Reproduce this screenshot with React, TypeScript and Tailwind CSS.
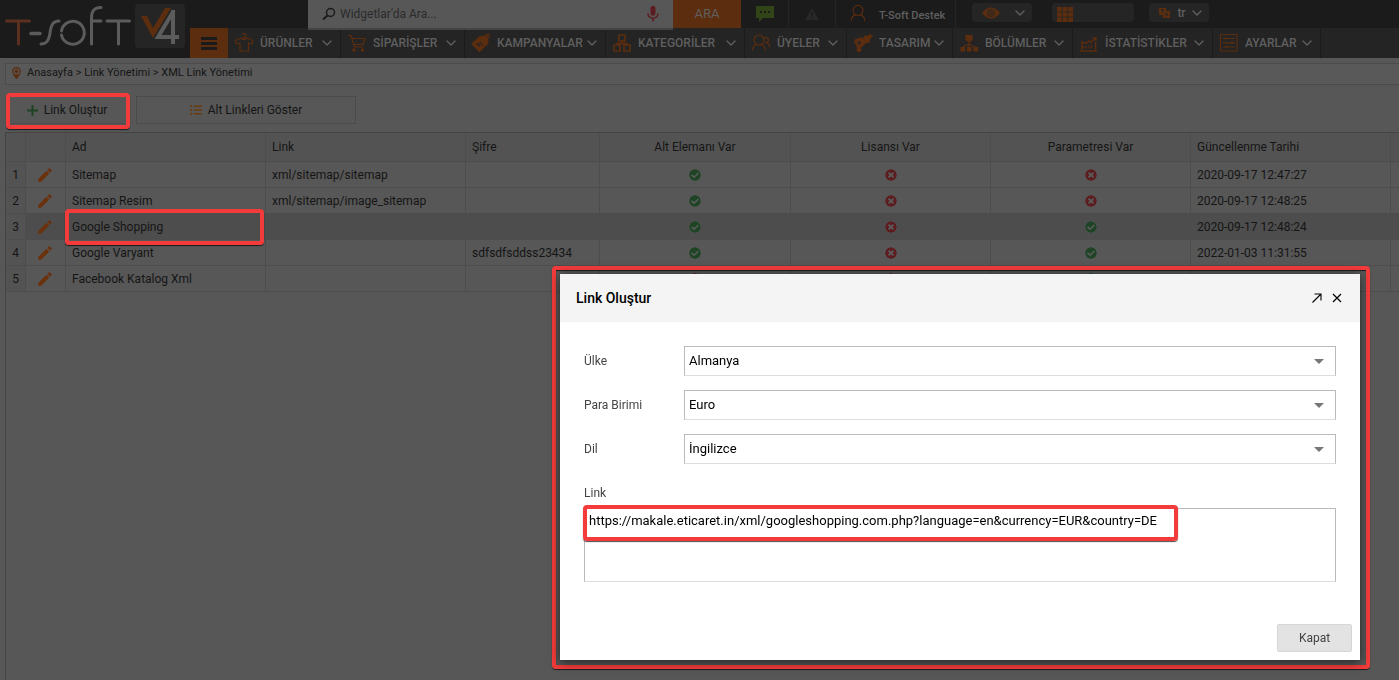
import { useState } from "react";
import type { ReactNode } from "react";
import { ChevronDown } from "lucide-react";
import { FaCheckCircle, FaTimesCircle, FaListUl } from "react-icons/fa";
import { MdEdit, MdMic } from "react-icons/md";

const Logo = () => (
  <svg width="190" height="58" viewBox="0 0 190 58" fill="none" aria-label="T-Soft V4" role="img">
    <g strokeWidth="3" strokeLinecap="round">
      <path d="M6.5 21H29.500M18.500 21V44" stroke="#5c3020" />
      <path d="M31 33.500H40" stroke="#5c5c5c" strokeWidth="3.500" />
      <path d="M41 44C47 44 49 40 50 33C51 25 53 21 59 21" stroke="#5c5c5c" />
      <path d="M61.500 35A11.500 11.500 0 1 0 66 23.500A11.500 11.500 0 0 0 61.500 31" stroke="#5c5c5c" />
      <path d="M91.500 44V18C91.500 11 94 7.500 101 7.500M91.500 21H101" stroke="#5c5c5c" />
      <path d="M107 21H129.500M118.500 21V44" stroke="#5c5c5c" />
    </g>
    <rect x="135" y="4" width="50" height="44" rx="4" fill="#252525" />
    <path d="M173 12L158 37H179M173 10V44" stroke="#5c5c5c" strokeWidth="4" />
    <path d="M141 16H147L153 28L165 8H171L153 38Z" fill="#5c2d0e" />
  </svg>
);

const Icon = ({ children, size = 20 }: { children: ReactNode; size?: number }) => (
  <svg width={size} height={size} viewBox="0 0 20 20" fill="none" stroke="#5c2d0e" strokeWidth="1.2" className="shrink-0">
    {children}
  </svg>
);

const menu = [
  {
    label: "ÜRÜNLER",
    width: "w-[113px]",
    icon: (
      <Icon>
        <path d="M10 5.500V4Q12 3.500 12 2Q12 .7 10 .7Q8.300 .7 8.300 2.300M7 5L1.500 7.500L2.500 11L6 10V18H14.500V10L18 11L18.800 7.500L13 5Q10 8 7 5Z" />
      </Icon>
    ),
  },
  {
    label: "SİPARİŞLER",
    width: "w-[124px]",
    icon: (
      <Icon>
        <path d="M1 2.500H4L7.500 14H16.500M5 5.500H18L16 11.500H6.500" />
        <circle cx="7" cy="17" r="1.700" fill="#5c2d0e" stroke="none" />
        <circle cx="15.500" cy="17" r="1.700" fill="#5c2d0e" stroke="none" />
      </Icon>
    ),
  },
  {
    label: "KAMPANYALAR",
    width: "w-[141px]",
    icon: (
      <Icon>
        <path d="M1 11L9 3.500L16 3L17 10L8.500 18.500Z" fill="#5c2d0e" />
        <path d="M13 6.500Q12 3 16 1.500Q19.500 1 18.500 4L15 7" />
        <path d="M9.500 8.500L8 14" stroke="#252525" strokeWidth="1" />
        <circle cx="6.500" cy="11" r="1" stroke="#252525" strokeWidth=".8" />
        <circle cx="11" cy="11.500" r="1" stroke="#252525" strokeWidth=".8" />
      </Icon>
    ),
  },
  {
    label: "KATEGORİLER",
    width: "w-[139px]",
    icon: (
      <Icon>
        <path d="M7 2H13V8H7ZM2 12H8V18H2ZM12 12H18V18H12ZM10 8V10.500M5 12V10.500H15V12" strokeWidth="1.600" />
      </Icon>
    ),
  },
  {
    label: "ÜYELER",
    width: "w-[102px]",
    icon: (
      <Icon>
        <circle cx="8" cy="7" r="5" />
        <path d="M1.500 17.500Q1.500 12 6 11.500M10 11.500Q14.500 12.500 14.500 17.500M13 5.500A2.500 2.500 0 1 1 14 9.500M15.500 10Q18.500 10 18.500 14" />
      </Icon>
    ),
  },
  {
    label: "TASARIM",
    width: "w-[106px]",
    icon: (
      <Icon>
        <path d="M2 7L8 5L11 6L12 3L15 3.500L17 1.500L19 3L16.500 6L16 9L12 10L9 13L7 14L8 17L6 19L4 17L4.500 13L2 10Z" fill="#5c2d0e" />
        <path d="M4 9L7 8L8 10L6 12Z" fill="#252525" stroke="none" />
      </Icon>
    ),
  },
  {
    label: "BÖLÜMLER",
    width: "w-[120px]",
    icon: (
      <Icon>
        <path d="M7 2.500H13V7L11.500 8H8.500L7 7ZM2 14.500H5.500V18H2ZM8.500 14.500H12V18H8.500ZM15 14.500H18.500V18H15Z" fill="#5c2d0e" />
        <path d="M10 8V14M4 14L10 11L16 14" />
      </Icon>
    ),
  },
  {
    label: "İSTATİSTİKLER",
    width: "w-[140px]",
    icon: (
      <Icon>
        <path d="M1 18H18M3 16.500V9L7 10.500L10 8L12 9.500L16.500 5M13.500 5H17V8M16.500 9V16.500" strokeWidth="1.500" />
        <path d="M5 15.500V13M7.500 15.500V13.500M10 15.500V12.500M12.500 15.500V12" />
      </Icon>
    ),
  },
  {
    label: "AYARLAR",
    width: "w-[108px]",
    icon: (
      <Icon>
        <rect x="1.500" y="1.500" width="16.500" height="16.500" rx="1" />
        <path d="M4 5.500H16M4 9.800H16M4 14H16M7 4.200V6.800M13 8.500V11.100M8 12.700V15.300" />
      </Icon>
    ),
  },
];

type Row = { name: string; link: string; pass: string; flags: boolean[]; date: string };

const rows: Row[] = [
  { name: "Sitemap", link: "xml/sitemap/sitemap", pass: "", flags: [true, false, false], date: "2020-09-17 12:47:27" },
  { name: "Sitemap Resim", link: "xml/sitemap/image_sitemap", pass: "", flags: [true, false, false], date: "2020-09-17 12:48:25" },
  { name: "Google Shopping", link: "", pass: "", flags: [true, false, true], date: "2020-09-17 12:48:24" },
  { name: "Google Varyant", link: "", pass: "sdfsdfsddss23434", flags: [true, false, true], date: "2022-01-03 11:31:55" },
  { name: "Facebook Katalog Xml", link: "", pass: "", flags: [false, false, true], date: "" },
];

const fields = [
  { id: "country", label: "Ülke", value: "Almanya" },
  { id: "currency", label: "Para Birimi", value: "Euro" },
  { id: "language", label: "Dil", value: "İngilizce" },
];

const Flag = ({ on }: { on: boolean }) =>
  on ? (
    <FaCheckCircle className="mx-auto h-3 w-3 rounded-full bg-[#5c5c5c] text-[#1f4425]" />
  ) : (
    <FaTimesCircle className="mx-auto h-3 w-3 rounded-full bg-[#5c5c5c] text-[#5c1d20]" />
  );

// red marker drawn round an element
const marker = "pointer-events-none absolute rounded border-4 border-[#f43b3b] shadow-[0_1px_1px_rgba(0,0,0,0.7)]";

const Header = () => (
  <header className="flex h-[58px] bg-[#1b1b1b] text-[#5f5f5f]">
    <a href="#" className="w-[190px] shrink-0">
      <Logo />
    </a>
    <div className="flex min-w-0 flex-1 flex-col">
      <div className="flex h-7 pl-[118px]">
        <label className="relative z-10 flex h-[30px] w-[365px] items-center border-b-2 border-[#444444] bg-[#575757] pr-2.5 pl-3.5">
          <svg width="14" height="14" viewBox="0 0 14 14" fill="none" stroke="#1b1b1b" strokeWidth="1.5">
            <circle cx="8.500" cy="5.500" r="4" />
            <path d="M5.500 8.500L1 12.500" strokeWidth="2" />
          </svg>
          <input
            type="text"
            aria-label="Ara"
            placeholder="Widgetlar'da Ara..."
            className="ml-1 min-w-0 flex-1 bg-transparent text-xs text-[#2b2b2b] outline-none placeholder:text-[#2b2b2b]"
          />
          <MdMic className="h-5 w-5 text-[#5c1d20]" />
        </label>
        <button className="w-[68px] bg-[#5c2d0e] text-[13px]">ARA</button>
        <button aria-label="Mesajlar" className="flex w-12 items-center justify-center border-r border-[#252525]">
          <svg width="18" height="16" viewBox="0 0 18 16">
            <path d="M0 0H18V12H7L3 16V12H0Z" fill="#304418" />
            <path d="M4 5H6V7H4ZM8 5H10V7H8ZM12 5H14V7H12Z" fill="#1b1b1b" />
          </svg>
        </button>
        <button aria-label="Uyarılar" className="flex w-[47px] items-center justify-center border-r border-[#252525]">
          <svg width="14" height="12" viewBox="0 0 14 12">
            <path d="M7 0L14 12H0Z" fill="#282828" />
            <path d="M6.300 4H7.700V8H6.300ZM6.300 9H7.700V10.500H6.300Z" fill="#1b1b1b" />
          </svg>
        </button>
        <a href="#" className="flex w-[120px] items-center gap-3 border-r border-[#252525] pl-[13px] text-[11px] font-medium">
          <Icon size={18}>
            <circle cx="10" cy="6" r="5.500" />
            <path d="M2.500 18Q2.500 12 7.500 11M12.500 11Q17.500 12 17.500 18" />
          </Icon>
          <span className="pt-1 whitespace-nowrap">T-Soft Destek</span>
        </a>
        <button aria-label="Görünüm" className="mt-[3px] ml-4 flex h-[19px] w-[60px] items-center justify-between rounded-sm bg-[#252525] pr-1 pl-2.5">
          <svg width="18" height="12" viewBox="0 0 18 12">
            <path d="M0 6Q9 -5 18 6Q9 17 0 6Z" fill="#5c2d0e" />
            <circle cx="9" cy="6" r="3.500" fill="none" stroke="#252525" />
            <circle cx="9" cy="6" r="1.500" fill="none" stroke="#252525" />
          </svg>
          <ChevronDown className="h-4 w-4" />
        </button>
        <button aria-label="Uygulamalar" className="mt-[3px] ml-5 flex h-[19px] w-[82px] items-end rounded-sm bg-[#252525] pl-[5px]">
          <svg width="16" height="15" viewBox="0 0 16 15" fill="#5c2d0e">
            <path d="M0 0H4.800V4.500H0ZM5.600 0H10.400V4.500H5.600ZM11.200 0H16V4.500H11.200ZM0 5.200H4.800V9.700H0ZM5.600 5.200H10.400V9.700H5.600ZM11.200 5.200H16V9.700H11.200ZM0 10.500H4.800V15H0ZM5.600 10.500H10.400V15H5.600ZM11.200 10.500H16V15H11.200Z" />
          </svg>
        </button>
        <button className="mt-[3px] ml-[15px] flex h-[19px] w-[60px] items-center justify-between rounded-sm bg-[#252525] pr-1 pl-2.5 text-xs font-medium">
          <svg width="11" height="10" viewBox="0 0 11 10">
            <path d="M0 0H7V3H11V10H4V7H0Z" fill="#5c2d0e" />
            <path d="M2 2H5M3.500 1V5M6 8L7.500 4.500L9 8" stroke="#252525" fill="none" />
          </svg>
          <span className="pl-1">tr</span>
          <ChevronDown className="h-4 w-4" />
        </button>
      </div>
      <nav className="flex h-[30px] bg-[#242424]">
        <button aria-label="Menü" className="flex w-[38px] shrink-0 items-center justify-center bg-[#5c2d0e]">
          <svg width="16" height="14" viewBox="0 0 16 14" stroke="#1b1b1b" strokeWidth="3">
            <path d="M0 2.500H16M0 7.500H16M0 12.500H16" />
          </svg>
        </button>
        {menu.map((m) => (
          <button
            key={m.label}
            className={`flex shrink-0 items-center border-r border-[#1b1b1b] pr-[5px] pl-1.5 text-xs font-medium whitespace-nowrap ${m.width}`}
          >
            {m.icon}
            <span className="ml-1.5 flex-1 text-left">{m.label}</span>
            <ChevronDown className="h-4 w-4" />
          </button>
        ))}
      </nav>
    </div>
  </header>
);

const cell = "truncate border-r border-b border-[#4d4d4d] px-1.5";

const LinkTable = () => (
  <table className="w-full table-fixed border-separate border-spacing-0 text-left text-xs">
    <thead>
      <tr className="h-[29px] bg-[#535353]">
        <th className={`${cell} w-5`} aria-label="Sıra" />
        <th className={`${cell} w-10`} aria-label="Düzenle" />
        <th className={`${cell} w-[200px] font-normal`}>Ad</th>
        <th className={`${cell} w-[200px] font-normal`}>Link</th>
        <th className={`${cell} w-[134px] font-normal`}>Şifre</th>
        <th className={`${cell} w-[191px] text-center font-normal`}>Alt Elemanı Var</th>
        <th className={`${cell} w-[200px] text-center font-normal`}>Lisansı Var</th>
        <th className={`${cell} w-[200px] text-center font-normal`}>Parametresi Var</th>
        <th className={`${cell} w-[200px] font-normal`}>Güncellenme Tarihi</th>
        <th className="border-b border-[#4d4d4d]" aria-label="Boş" />
      </tr>
    </thead>
    <tbody>
      {rows.map((r, i) => (
        <tr key={r.name} className={i === 2 ? "h-[26px] bg-[#4d4d4d]" : "h-[26px]"}>
          <td className="border-r border-b border-[#4d4d4d] bg-[#535353] text-center">{i + 1}</td>
          <td className={cell}>
            <button aria-label={`${r.name} düzenle`} className="mx-auto block pt-px pr-0.5">
              <MdEdit className="h-[18px] w-[18px] text-[#6b300c]" />
            </button>
          </td>
          <td className={cell}>{r.name}</td>
          <td className={cell}>{r.link}</td>
          <td className={cell}>{r.pass}</td>
          {r.flags.map((f, n) => (
            <td key={n} className={cell}>
              <Flag on={f} />
            </td>
          ))}
          <td className={cell}>{r.date}</td>
          <td className="border-b border-[#4d4d4d]" />
        </tr>
      ))}
    </tbody>
  </table>
);

const LinkDialog = () => {
  const [link, setLink] = useState(
    "https://makale.eticaret.in/xml/googleshopping.com.php?language=en&currency=EUR&country=DE"
  );

  return (
    <div className="fixed right-[29px] bottom-[11px] rounded border-4 border-[#f43b3b] pt-1 pr-1.5 pb-[5px] pl-1 shadow-[0_1px_1px_rgba(0,0,0,0.7),inset_0_1px_1px_rgba(0,0,0,0.7)]">
      <section role="dialog" aria-labelledby="dialog-title" className="w-[800px] max-w-full bg-white text-black shadow-[0_2px_10px_rgba(0,0,0,0.6)]">
        <div className="flex h-12 items-center bg-[#f4f4f4] pr-[13px] pl-4">
          <h2 id="dialog-title" className="flex-1 text-sm font-medium">
            Link Oluştur
          </h2>
          <button aria-label="Büyüt" className="flex h-5 w-5 items-center justify-center">
            <svg width="10" height="10" viewBox="0 0 10 10" fill="none" stroke="black" strokeWidth="1.1">
              <path d="M.5 9.500L9 1M2.500 1H9V7.500" />
            </svg>
          </button>
          <button aria-label="Pencereyi kapat" className="flex h-5 w-5 items-center justify-center">
            <svg width="10" height="10" viewBox="0 0 10 10" stroke="black" strokeWidth="1.2">
              <path d="M1 1L9 9M9 1L1 9" />
            </svg>
          </button>
        </div>
        <form className="px-6 pt-6">
          {fields.map((f) => (
            <div key={f.id} className="mb-3.5 flex items-center">
              <label htmlFor={f.id} className="w-[100px] shrink-0 text-xs text-[#444444]">
                {f.label}
              </label>
              <div className="relative flex-1">
                <select
                  id={f.id}
                  className="block h-[30px] w-full appearance-none border border-[#bbbbbb] border-b-[#dddddd] bg-white px-1 text-[13px] outline-none"
                >
                  <option>{f.value}</option>
                </select>
                <svg width="10" height="5" viewBox="0 0 10 5" className="pointer-events-none absolute top-[13px] right-3 fill-[#777777]">
                  <path d="M0 0H10L5 5Z" />
                </svg>
              </div>
            </div>
          ))}
          <label htmlFor="link" className="block h-[30px] pt-[7px] text-xs text-[#444444]">
            Link
          </label>
          <div className="relative">
            <textarea
              id="link"
              value={link}
              onChange={(e) => setLink(e.target.value)}
              className="block h-[74px] w-full resize-none border border-[#bbbbbb] border-b-[#dddddd] bg-white px-1 py-0.5 text-[13px] leading-5 outline-none"
            />
            <div className={`${marker} -top-[3px] -left-px h-9 w-[595px]`} />
          </div>
        </form>
        <div className="flex justify-end px-2 pt-[42px] pb-2">
          <button className="h-7 w-[75px] rounded-xs border border-[#d6d6d6] bg-[#e3e3e3] text-xs text-[#444444]">Kapat</button>
        </div>
      </section>
    </div>
  );
};

export default function App() {
  return (
    <div className="flex min-h-screen flex-col bg-[#575757] font-[Roboto,'Noto_Sans',sans-serif] text-[#151515]">
      <Header />
      <nav aria-label="Konum" className="mt-[5px] ml-[5px] flex h-[22px] items-center gap-1.5 border border-r-0 border-[#4b4b4b] bg-[#595959] pb-0.5 pl-1.5 text-[11px]">
        <svg width="9" height="12" viewBox="0 0 9 12" fill="none" stroke="#5c2d0e" strokeWidth="1.3">
          <path d="M4.500 11.500L1.500 7Q-.5 1 4.500 .7Q9.500 1 7.500 7Z" />
          <circle cx="4.500" cy="4.300" r="1.200" fill="#5c2d0e" />
          <path d="M3 8L4.500 11L6 8Z" fill="#5c2d0e" />
        </svg>
        <span>
          <a href="#">Anasayfa</a> &gt; <a href="#">Link Yönetimi</a> &gt; <a href="#">XML Link Yönetimi</a>
        </span>
      </nav>
      <div className="flex gap-[7px] px-[9px] pt-[11px] pb-2 text-xs">
        <div className="relative">
          <button className="flex h-7 w-[120px] items-center justify-center gap-1.5 border border-[#4b4b4b] pr-1">
            <svg width="11" height="11" viewBox="0 0 11 11" stroke="#1f4425" strokeWidth="2">
              <path d="M5.500 0V11M0 5.500H11" />
            </svg>
            Link Oluştur
          </button>
          <div className={`${marker} -top-[3px] -left-[3px] h-9 w-[124px]`} />
        </div>
        <button className="flex h-7 w-[220px] items-center justify-center gap-1.5 border border-[#4b4b4b]">
          <FaListUl className="h-3 w-3 text-[#6b3a0c]" />
          Alt Linkleri Göster
        </button>
      </div>
      <main className="relative ml-[5px] flex-1 border-t border-l border-[#444444]">
        <LinkTable />
        <div className={`${marker} top-[76px] left-[59px] h-9 w-[199px]`} />
      </main>
      <LinkDialog />
    </div>
  );
}
